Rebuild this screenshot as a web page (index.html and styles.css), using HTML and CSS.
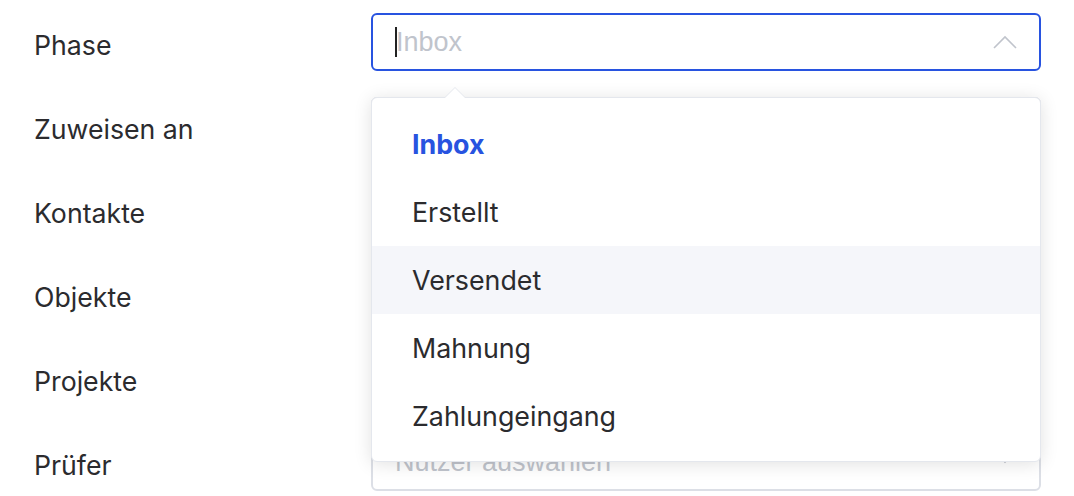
FILE: index.html
```html
<!DOCTYPE html>
<html lang="de">
<head>
<meta charset="utf-8">
<title>Formular</title>
<link rel="stylesheet" href="styles.css">
</head>
<body>
<div class="form">
  <div class="row">
    <label class="label">Phase</label>
    <div class="select is-focus">
      <span class="caret"></span><span class="placeholder">Inbox</span>
      <svg class="chev" width="24" height="14" viewBox="0 0 24 14"><path d="M1 13 L12 2 L23 13" fill="none" stroke="#c0c4cc" stroke-width="1.6"/></svg>
    </div>
  </div>
  <div class="row">
    <label class="label">Zuweisen an</label>
    <div class="select"></div>
  </div>
  <div class="row">
    <label class="label">Kontakte</label>
    <div class="select"></div>
  </div>
  <div class="row">
    <label class="label">Objekte</label>
    <div class="select"></div>
  </div>
  <div class="row">
    <label class="label">Projekte</label>
    <div class="select"></div>
  </div>
  <div class="row">
    <label class="label">Prüfer</label>
    <div class="select">
      <span class="placeholder">Nutzer auswählen</span>
      <svg class="chev chev-down" width="24" height="14" viewBox="0 0 24 14"><path d="M1 1 L12 12 L23 1" fill="none" stroke="#c0c4cc" stroke-width="1.6"/></svg>
    </div>
  </div>

  <div class="dropdown">
    <span class="arrow"></span>
    <ul class="options">
      <li class="option selected">Inbox</li>
      <li class="option">Erstellt</li>
      <li class="option hover">Versendet</li>
      <li class="option">Mahnung</li>
      <li class="option">Zahlungeingang</li>
    </ul>
  </div>
</div>
</body>
</html>
```

FILE: styles.css
```css
* { box-sizing: border-box; }
html, body { margin: 0; padding: 0; background: #fff; }
body {
  font-family: "Inter", "Noto Sans", sans-serif;
  color: #2b2b2e;
  width: 1074px;
  height: 496px;
  overflow: hidden;
}
.form {
  position: relative;
  padding: 13px 0 0 34px;
  display: grid;
  grid-template-columns: 337px 670px;
  grid-auto-rows: 58px;
  row-gap: 26px;
}
.row { display: contents; }
.label {
  display: flex;
  align-items: center;
  padding-top: 6px;
  font-size: 26.7px;
  color: #2b2b2e;
}
.select {
  position: relative;
  display: flex;
  align-items: center;
  height: 58px;
  border: 2px solid #dcdfe6;
  border-radius: 6px;
  padding: 0 22px 0 22px;
  font-family: "Liberation Sans", Arial, sans-serif;
  font-size: 27px;
}
.select.is-focus { border-color: #2853e0; }
.placeholder { color: #c0c4cc; flex: 1; white-space: nowrap; }
.caret {
  width: 2px;
  height: 30px;
  background: #222;
  margin-right: -1px;
}
.chev { flex: none; }
.chev-down { margin-top: -10px; }

.dropdown {
  position: absolute;
  left: 371px;
  top: 97px;
  width: 670px;
  height: 365px;
  background: #fff;
  border: 1px solid #e4e7ed;
  border-radius: 6px;
  box-shadow: 0 2px 18px rgba(0, 0, 0, 0.12);
}
.arrow {
  position: absolute;
  top: -11px;
  left: 72px;
  width: 0;
  height: 0;
  border-left: 11px solid transparent;
  border-right: 11px solid transparent;
  border-bottom: 11px solid #e4e7ed;
}
.arrow::after {
  content: "";
  position: absolute;
  left: -10px;
  top: 1px;
  border-left: 10px solid transparent;
  border-right: 10px solid transparent;
  border-bottom: 10px solid #fff;
}
.options {
  list-style: none;
  margin: 0;
  padding: 12px 0;
}
.option {
  height: 68px;
  line-height: 68px;
  padding-left: 40px;
  font-size: 26.8px;
  color: #2b2b2e;
}
.option.selected { color: #2853e0; font-weight: 700; }
.option.hover { background: #f5f6fa; }
```
